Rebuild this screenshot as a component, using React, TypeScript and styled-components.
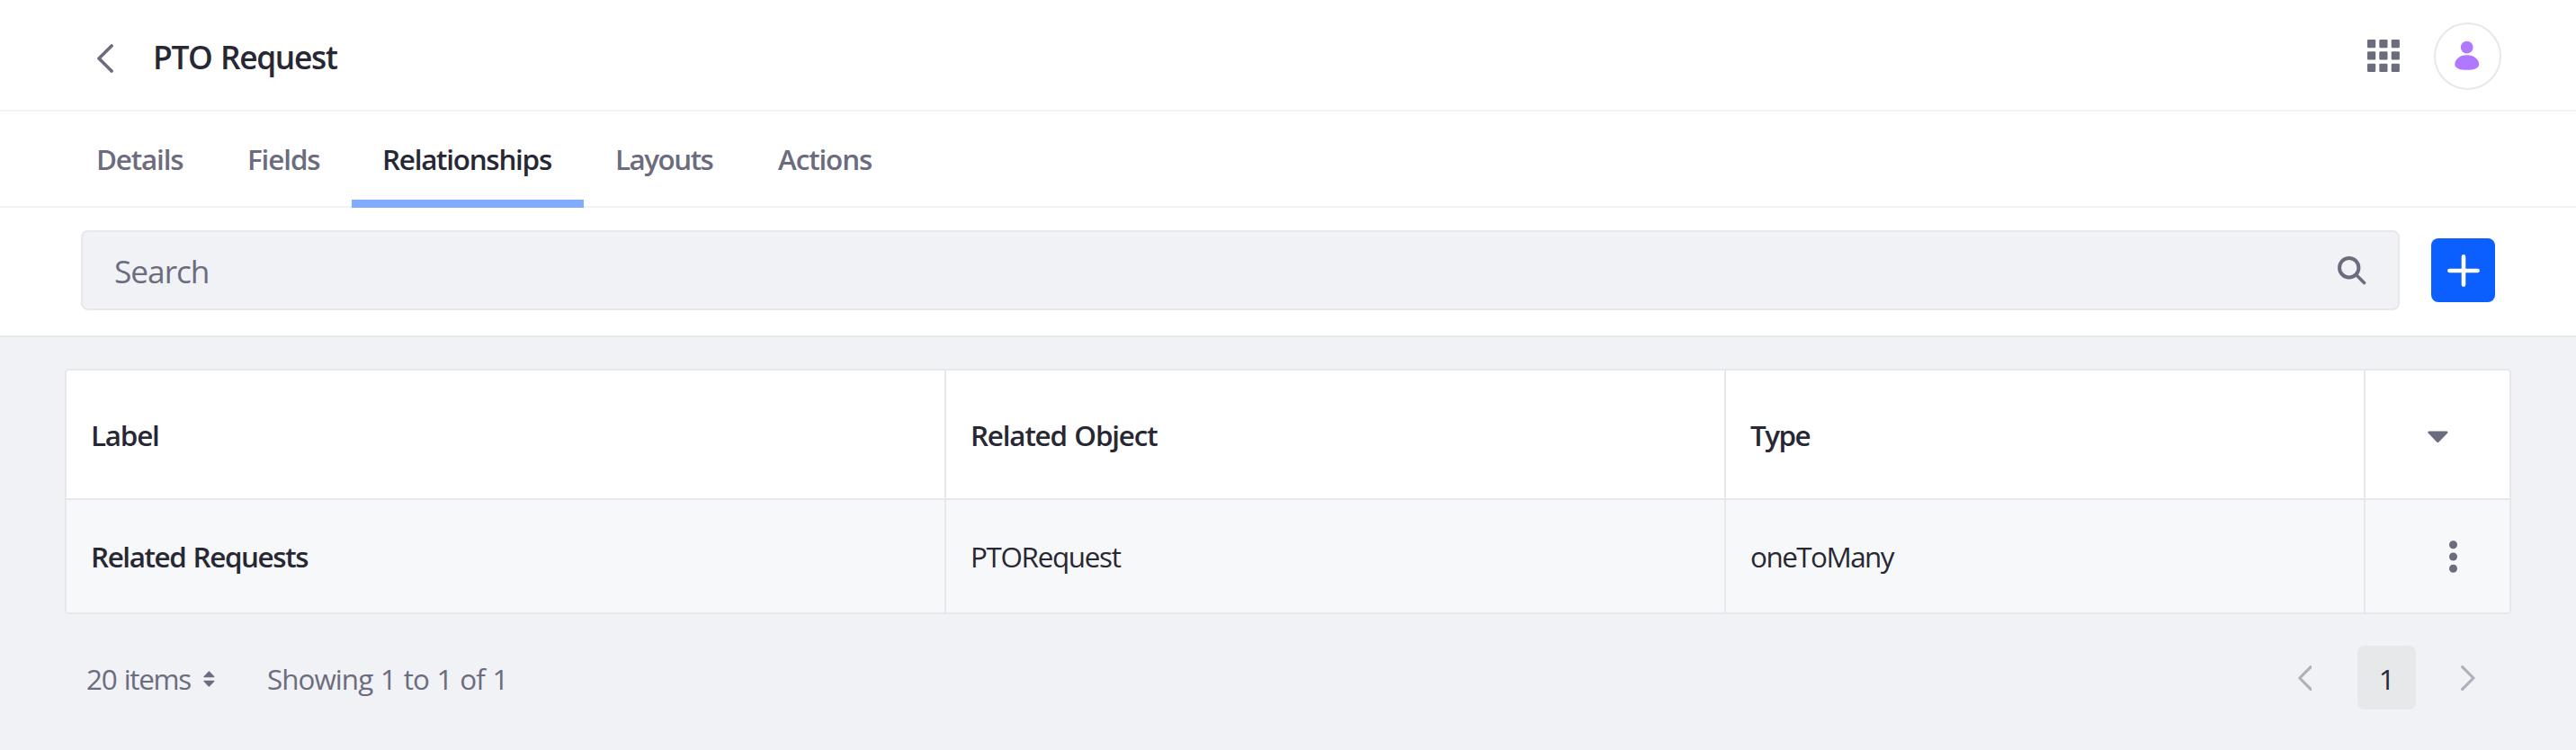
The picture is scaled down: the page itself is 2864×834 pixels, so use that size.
import React from 'react';
import styled, { createGlobalStyle, css } from 'styled-components';

const color = {
  dark: '#272833',
  gray: '#6b6c7e',
  muted: '#b0b0bc',
  border: '#e7e7ed',
  light: '#f1f2f5',
  white: '#ffffff',
  row: '#f7f8f9',
  primary: '#0b5fff',
  primaryLight: '#80acff',
  purple: '#b078ff',
};

const GlobalStyle = createGlobalStyle`
  * { box-sizing: border-box; }
  body {
    margin: 0;
    background: ${color.light};
    color: ${color.dark};
    font-family: "Open Sans", "Noto Sans", sans-serif;
    font-size: 31.4px;
    line-height: 48px;
    word-spacing: 1.5px;
  }
  button { border: 0; padding: 0; background: none; font: inherit; color: inherit; word-spacing: inherit; }
  svg { display: block; flex: none; }
`;

const Page = styled.div`
  min-height: 834px;
`;

const Header = styled.header`
  display: flex;
  align-items: center;
  height: 124px;
  padding: 1px 83px 0 108px;
  background: ${color.white};
  border-bottom: 2px solid ${color.light};
`;

const BackButton = styled.button`
  margin-top: 7px;
`;

const Title = styled.h1`
  flex: 1;
  margin: 3px 0 0 44px;
  font-size: 35.3px;
  font-weight: 600;
  letter-spacing: -1.3px;
`;

const AppsButton = styled.button`
  margin-right: 38px;
`;

const Avatar = styled.div`
  display: flex;
  justify-content: center;
  width: 75px;
  height: 75px;
  margin-top: 2px;
  padding: 18px 1px 0 0;
  border: 2px solid ${color.border};
  border-radius: 50%;
`;

const Tabs = styled.nav`
  display: flex;
  height: 107px;
  padding-left: 72px;
  background: ${color.white};
  border-bottom: 2px solid ${color.light};
`;

const Tab = styled.a<{ $width: number; $tracking: number; $active?: boolean }>`
  width: ${(p) => p.$width}px;
  height: 107px;
  padding: 29px 0 0 35px;
  font-weight: 600;
  letter-spacing: ${(p) => p.$tracking}px;
  white-space: nowrap;
  color: ${(p) => (p.$active ? color.dark : color.gray)};
  ${(p) => p.$active && css`
    padding-left: 34px;
    border-bottom: 9px solid ${color.primaryLight};
  `}
`;

const Toolbar = styled.div`
  display: flex;
  align-items: center;
  gap: 35px;
  height: 144px;
  padding: 0 90px 3px;
  background: ${color.white};
  border-bottom: 2px solid ${color.border};
`;

const SearchField = styled.div`
  display: flex;
  flex: 1;
  align-items: center;
  justify-content: space-between;
  height: 89px;
  padding: 0 35px;
  background: ${color.light};
  border: 2px solid ${color.border};
  border-radius: 8px;
`;

const Placeholder = styled.span`
  font-size: 35.3px;
  letter-spacing: -1.05px;
  color: ${color.gray};
`;

const AddButton = styled.button`
  display: flex;
  align-items: center;
  justify-content: center;
  width: 71px;
  height: 71px;
  border-radius: 8px;
  background: ${color.primary};
`;

const Table = styled.div`
  margin: 35px 72px 0;
  overflow: hidden;
  border: 2px solid ${color.border};
  border-radius: 5px;
`;

const Row = styled.div<{ $head?: boolean }>`
  display: grid;
  grid-template-columns: 978px 867px 711px 1fr;
  height: ${(p) => (p.$head ? 144 : 125)}px;
  background: ${(p) => (p.$head ? color.white : color.row)};
  ${(p) => p.$head && css`border-bottom: 2px solid ${color.border};`}
`;

const Cell = styled.div<{ $strong?: boolean; $tracking?: number }>`
  display: flex;
  align-items: center;
  padding: 1px 27px 0;
  border-right: 2px solid ${color.border};
  font-weight: ${(p) => (p.$strong ? 600 : 400)};
  letter-spacing: ${(p) => p.$tracking ?? 0}px;
`;

const ActionCell = styled.div<{ $indent: number; $drop?: number }>`
  display: flex;
  align-items: center;
  padding: ${(p) => p.$drop ?? 0}px 0 0 ${(p) => p.$indent}px;
`;

const Footer = styled.footer`
  display: flex;
  align-items: center;
  height: 71px;
  margin-top: 35px;
  padding: 0 112px 0 96px;
  color: ${color.gray};
`;

const PageSize = styled.button`
  display: flex;
  align-items: center;
  width: 201px;
  gap: 14px;
  padding-top: 2px;
  letter-spacing: -1.3px;
  white-space: nowrap;
`;

const Summary = styled.span`
  flex: 1;
  padding-top: 2px;
  letter-spacing: -0.95px;
`;

const Pager = styled.div`
  display: flex;
  align-items: center;
`;

const CurrentPage = styled.span`
  display: flex;
  align-items: center;
  justify-content: center;
  width: 65px;
  height: 71px;
  margin: 0 50px 0 51px;
  padding-top: 2px;
  border-radius: 8px;
  background: #e7e8ea;
  color: ${color.dark};
`;

const Chevron = ({ right, size, stroke }: { right?: boolean; size: number; stroke: string }) => (
  <svg width={(size * 18) / 32} height={size} viewBox="0 0 18 32" fill="none" stroke={stroke}
    strokeWidth="3.6" strokeLinecap="round" strokeLinejoin="round">
    <path d={right ? 'M1.9 1.9 16 16 1.9 30.1' : 'M16.1 1.9 2 16 16.1 30.1'} />
  </svg>
);

const AppsIcon = () => (
  <svg width="36" height="36" viewBox="0 0 36 36" fill={color.gray}>
    {[0, 13.3, 26.7].map((y) =>
      [0, 13.3, 26.7].map((x) => <rect key={`${x}-${y}`} x={x} y={y} width="9.2" height="9.2" rx="1.2" />),
    )}
  </svg>
);

const UserIcon = () => (
  <svg width="28" height="34" viewBox="0 0 28 34" fill={color.purple}>
    <circle cx="13.7" cy="7.7" r="6.9" />
    <path d="M13.7 16.3C5.6 16.3.3 21.3.3 26.4.3 30.4 5.2 32.8 13.7 32.8S27.1 30.4 27.1 26.4C27.1 21.3 21.8 16.3 13.7 16.3Z" />
  </svg>
);

const SearchIcon = () => (
  <svg width="32" height="32" viewBox="0 0 32 32" fill="none" stroke={color.gray} strokeLinecap="round">
    <circle cx="12.7" cy="12.7" r="10.7" strokeWidth="4" />
    <path d="M21 21 29.5 29.5" strokeWidth="3.6" />
  </svg>
);

const PlusIcon = () => (
  <svg width="36" height="36" viewBox="0 0 36 36" stroke={color.white} strokeWidth="4.6" strokeLinecap="round">
    <path d="M18 2.4V33.6M2.4 18H33.6" />
  </svg>
);

const CaretIcon = () => (
  <svg width="23" height="14" viewBox="0 0 23 14" fill={color.gray}>
    <path d="M1.4.6H21.4C22.4.6 22.8 1.8 22.2 2.6L12.6 12.6Q11.4 13.6 10.2 12.6L.6 2.6C0 1.8.4.6 1.4.6Z" />
  </svg>
);

const DotsIcon = () => (
  <svg width="9" height="36" viewBox="0 0 9 36" fill={color.gray}>
    <circle cx="4.5" cy="4.7" r="4.5" />
    <circle cx="4.5" cy="18" r="4.5" />
    <circle cx="4.5" cy="31.3" r="4.5" />
  </svg>
);

const SortIcon = () => (
  <svg width="13" height="18" viewBox="0 0 13 18" fill={color.gray}>
    <path d="M.9 7.2Q0 7 .5 6.2L5.7.7Q6.4 0 7.1.7L12.3 6.2Q12.8 7 11.9 7.2Z" />
    <path d="M.9 10.8Q0 11 .5 11.8L5.7 17.3Q6.4 18 7.1 17.3L12.3 11.8Q12.8 11 11.9 10.8Z" />
  </svg>
);

const tabs = [
  { label: 'Details', width: 168, tracking: -1.15 },
  { label: 'Fields', width: 151, tracking: -1.1 },
  { label: 'Relationships', width: 258, tracking: -1.25, active: true },
  { label: 'Layouts', width: 181, tracking: -1.5 },
  { label: 'Actions', width: 176, tracking: -1.1 },
];

export default function App() {
  return (
    <Page>
      <GlobalStyle />
      <Header>
        <BackButton aria-label="Back"><Chevron size={32} stroke={color.gray} /></BackButton>
        <Title>PTO Request</Title>
        <AppsButton aria-label="Applications"><AppsIcon /></AppsButton>
        <Avatar><UserIcon /></Avatar>
      </Header>
      <Tabs>
        {tabs.map((t) => (
          <Tab key={t.label} $width={t.width} $tracking={t.tracking} $active={t.active}>{t.label}</Tab>
        ))}
      </Tabs>
      <Toolbar>
        <SearchField>
          <Placeholder>Search</Placeholder>
          <SearchIcon />
        </SearchField>
        <AddButton aria-label="Add"><PlusIcon /></AddButton>
      </Toolbar>
      <Table>
        <Row $head>
          <Cell $strong $tracking={-1.2}>Label</Cell>
          <Cell $strong $tracking={-1.18}>Related Object</Cell>
          <Cell $strong $tracking={-1.5}>Type</Cell>
          <ActionCell $indent={69} $drop={5}><CaretIcon /></ActionCell>
        </Row>
        <Row>
          <Cell $strong $tracking={-1.4}>Related Requests</Cell>
          <Cell $tracking={-1.33}>PTORequest</Cell>
          <Cell $tracking={-1.5}>oneToMany</Cell>
          <ActionCell $indent={93}><DotsIcon /></ActionCell>
        </Row>
      </Table>
      <Footer>
        <PageSize>20 items<SortIcon /></PageSize>
        <Summary>Showing 1 to 1 of 1</Summary>
        <Pager>
          <Chevron size={28} stroke={color.muted} />
          <CurrentPage>1</CurrentPage>
          <Chevron right size={28} stroke={color.muted} />
        </Pager>
      </Footer>
    </Page>
  );
}
